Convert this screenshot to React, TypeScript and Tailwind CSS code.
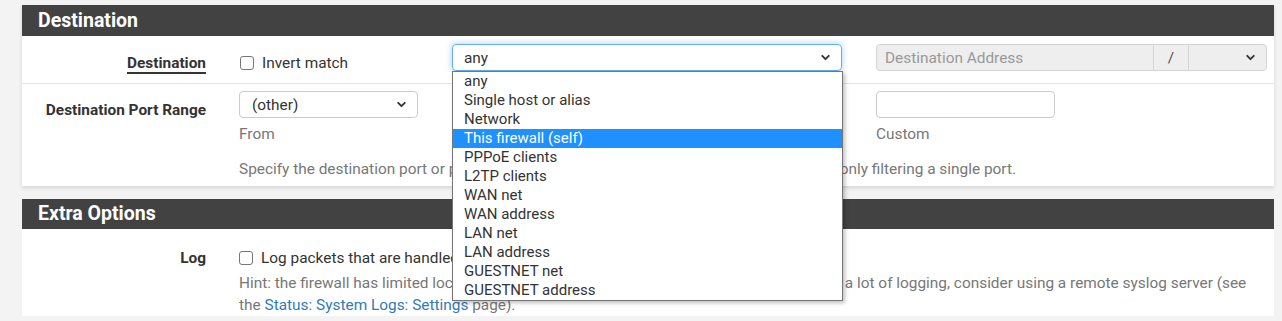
import { ChevronDown } from 'lucide-react';

const options = [
  'any',
  'Single host or alias',
  'Network',
  'This firewall (self)',
  'PPPoE clients',
  'L2TP clients',
  'WAN net',
  'WAN address',
  'LAN net',
  'LAN address',
  'GUESTNET net',
  'GUESTNET address',
];

function Checkbox() {
  return <span className="inline-block w-[14px] h-[14px] rounded-[3px] border border-[#767676] bg-white shrink-0" />;
}

function Chevron() {
  return <ChevronDown className="w-[13px] h-[13px] text-[#333]" strokeWidth={3.5} />;
}

export default function App() {
  return (
    <div
      className="relative w-full h-[321px] overflow-hidden bg-[#f3f3f3] pl-[22px] pr-[8px] pt-[5px] text-[15.4px] leading-[20px] text-[#333]"
      style={{ fontFamily: 'Roboto, "Liberation Sans", sans-serif' }}
    >
      {/* Destination panel */}
      <div className="bg-white shadow-[0_2px_4px_rgba(0,0,0,0.12)]">
        <div className="h-[31px] bg-[#424242] pl-[16px] flex items-center">
          <h2 className="text-[19.5px] font-bold text-white leading-none">Destination</h2>
        </div>

        <div className="flex items-start h-[48px] pt-[8px] border-b border-[#e5e5e5]">
          <div className="w-[184px] pt-[9px] text-right font-bold">
            <span className="border-b-2 border-[#333]">Destination</span>
          </div>
          <label className="ml-[34px] pt-[9px] w-[178px] flex items-center gap-[8px] text-[#333]">
            <Checkbox />
            <span>Invert match</span>
          </label>
          <div className="ml-[34px] w-[390px] h-[27px] rounded-[4px] border border-[#66afe9] shadow-[0_0_6px_rgba(102,175,233,0.6)] flex items-center justify-between pl-[11px] pr-[9px]">
            <span>any</span>
            <Chevron />
          </div>
          <div className="ml-[34px] w-[391px] h-[27px] flex">
            <div className="flex-1 rounded-l-[4px] border border-[#d4d4d4] bg-[#eee] flex items-center pl-[8px] text-[#999]">
              Destination Address
            </div>
            <div className="w-[34px] border-y border-[#d4d4d4] bg-[#eee] flex items-center justify-center text-[#555]">/</div>
            <div className="w-[79px] rounded-r-[4px] border border-[#d4d4d4] bg-[#eee] flex items-center justify-end pr-[9px]">
              <Chevron />
            </div>
          </div>
        </div>

        <div className="flex pt-[7px] pb-[7px]">
          <div className="w-[184px] text-right font-bold pt-[9px]">Destination Port Range</div>
          <div className="ml-[33px] flex-1">
            <div className="flex">
              <div className="w-[179px]">
                <div className="h-[27px] rounded-[4px] border border-[#ccc] flex items-center justify-between pl-[12px] pr-[9px]">
                  <span>(other)</span>
                  <Chevron />
                </div>
                <div className="mt-[6px] h-[20px] text-[#777]">From</div>
              </div>
              <div className="ml-[34px] w-[179px]">
                <div className="h-[27px] rounded-[4px] border border-[#ccc] flex items-center justify-between pl-[12px] pr-[9px]">
                  <span>(other)</span>
                  <Chevron />
                </div>
                <div className="mt-[6px] h-[20px] text-[#777]">To</div>
              </div>
              <div className="ml-[245px] w-[179px]">
                <div className="h-[27px] rounded-[4px] border border-[#ccc]" />
                <div className="mt-[6px] h-[20px] text-[#777]">Custom</div>
              </div>
            </div>
            <p className="mt-[15px] text-[#777]">
              Specify the destination port or port range for this rule. The "To" field may be left empty if only filtering a single port.
            </p>
          </div>
        </div>
      </div>

      {/* Extra Options panel */}
      <div className="mt-[13px] bg-white">
        <div className="h-[30px] bg-[#424242] pl-[16px] flex items-center">
          <h2 className="text-[19.5px] font-bold text-white leading-none">Extra Options</h2>
        </div>
        <div className="flex pt-[18px]">
          <div className="w-[184px] text-right font-bold pt-[1px]">Log</div>
          <div className="ml-[33px] w-[1028px]">
            <label className="flex items-center gap-[8px] h-[22px]">
              <Checkbox />
              <span>Log packets that are handled by this rule</span>
            </label>
            <p className="mt-[3px] leading-[22px] text-[#777]">
              Hint: the firewall has limited local log space. Don't turn on logging for everything. If doing a lot of logging, consider using a remote syslog server (see the{' '}
              <a className="text-[#337ab7]">Status: System Logs: Settings</a> page).
            </p>
          </div>
        </div>
      </div>

      {/* open select list */}
      <div className="absolute left-[452px] top-[71px] w-[391px] bg-white border border-[#767676] shadow-[2px_2px_4px_rgba(0,0,0,0.25)] text-[15px]">
        {options.map((o) => (
          <div
            key={o}
            className={`h-[19px] leading-[19px] pl-[11px] ${
              o === 'This firewall (self)' ? 'bg-[#1e90ff] text-white' : 'text-[#333]'
            }`}
          >
            {o}
          </div>
        ))}
      </div>
    </div>
  );
}
